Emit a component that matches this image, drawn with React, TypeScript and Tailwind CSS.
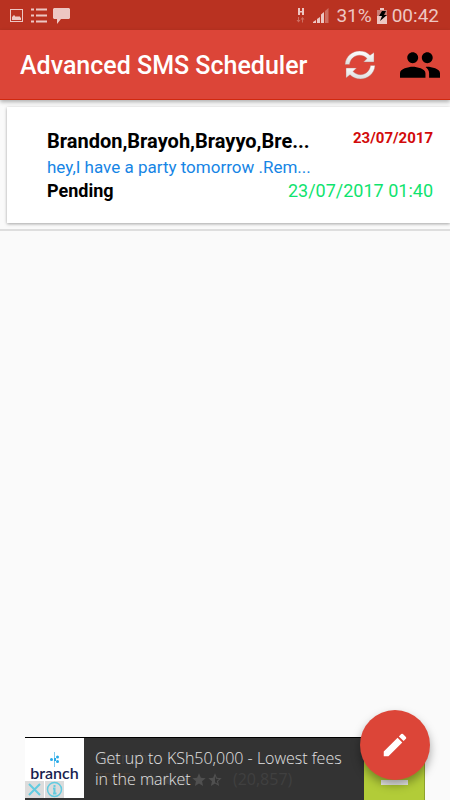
import { MdEdit, MdPeople, MdStar, MdStarHalf } from "react-icons/md"

type Message = {
  id: number
  recipients: string
  created: string
  text: string
  status: string
  sendAt: string
}

const messages: Message[] = [
  {
    id: 1,
    recipients: "Brandon,Brayoh,Brayyo,Bre...",
    created: "23/07/2017",
    text: "hey,I have a party tomorrow .Rem...",
    status: "Pending",
    sendAt: "23/07/2017 01:40",
  },
]

function StatusBar() {
  return (
    <div className="flex h-[30px] items-center justify-between bg-[#b93221] pl-[10px] pr-[11px] pt-px text-[#edc7c3]">
      <div className="flex items-center gap-2">
        <svg width="13" height="13" viewBox="0 0 13 13" fill="none">
          <rect x="0.5" y="0.5" width="12" height="12" stroke="currentColor" />
          <path d="M2 11V8l2-2 2 2 1-1 1 1 1-1 2 2v2z" fill="currentColor" />
        </svg>
        <svg width="16" height="15" viewBox="0 0 16 15" fill="currentColor">
          <path d="M0 0.500h3v2H0zM5 0.500h11v2H5zM0 6.500h3v2H0zM5 6.500h11v2H5zM0 12.500h3v2H0zM5 12.500h11v2H5z" />
        </svg>
        <svg className="-ml-[2px]" width="17" height="16" viewBox="0 0 17 16" fill="currentColor">
          <path d="M1 0h15l1 1v9l-1 1H8l-4 5v-5H1l-1-1V1z" />
        </svg>
      </div>
      <div className="flex items-center">
        <svg className="mr-2" width="9" height="15" viewBox="0 0 9 15" fill="currentColor">
          <path d="M2 0h2v3h2V0h2v7H6V4.500H4V7H2z" />
          <path d="M2 9h1v3h1.500l-2 2.500-2-2.500H2zM6 14.500v-3H4.500l2-2.500 2 2.500H7v3z" opacity="0.4" />
        </svg>
        <svg className="mr-[7px]" width="16" height="15" viewBox="0 0 16 15" fill="currentColor">
          <path d="M0 15v-1l3-2v3zM4 15v-4l3-2v6zM8 15V6.500L11 4v11z" />
          <path d="M12 15V3l3.500-3v15z" opacity="0.4" />
        </svg>
        <span className="text-[19px] leading-6">31%</span>
        <svg className="mx-[5px]" width="10" height="16" viewBox="0 0 10 16">
          <path d="M3 0h4v2h3v14H0V2h3z" fill="currentColor" />
          <path d="M0 2h10v6H0z" fill="#c97e75" />
          <path d="M5 3h4L7 7h3l-7 6 2-5H2z" fill="#000" />
        </svg>
        <span className="text-[19px] leading-6">00:42</span>
      </div>
    </div>
  )
}

function Header() {
  return (
    <header className="relative flex h-[70px] items-center border-b border-[#d0290f] bg-[#dc4538] pl-5 pr-[10px] shadow-[0_2px_4px_rgba(0,0,0,0.3)]">
      <h1 className="flex-1 whitespace-nowrap pt-[2px] text-[25px] font-medium leading-8 text-white">
        Advanced SMS Scheduler
      </h1>
      <button aria-label="Refresh" className="mr-6">
        <svg width="32" height="30" viewBox="0 0 32 30">
          <defs>
            <linearGradient id="silver" x1="0" y1="0" x2="0" y2="1">
              <stop offset="0" stopColor="#fff" />
              <stop offset="1" stopColor="#dedede" />
            </linearGradient>
          </defs>
          <g fill="url(#silver)" stroke="#b9675f" strokeWidth="0.4">
            <path d="M1 14.500C1.500 6.500 8 1 15.500 1c4.500 0 8 1.500 10.500 4.200L30 2.500V12H19.500l3.500-3.500C21 6.500 18.500 5.300 15.500 5.300c-5 0-9.300 3.700-10 9.200z" />
            <path d="M31 15.500C30.500 23.500 24 29 16.500 29c-4.500 0-8-1.500-10.500-4.200L2 28V18h10.500L9 21.500c2 2 4.500 3.200 7.500 3.200 5 0 9.300-3.700 10-9.200z" />
          </g>
        </svg>
      </button>
      <button aria-label="Contacts">
        {/* viewBox trims the icon's empty margin */}
        <MdPeople viewBox="1 5 22 14" className="h-[26px] w-10 text-black" />
      </button>
    </header>
  )
}

function MessageCard({ message }: { message: Message }) {
  return (
    <li className="border-b-2 border-[#dedede] pb-[6px] pl-[7px] pt-[7px]">
      <div className="bg-white pb-5 pl-10 pr-[17px] pt-5 shadow-[0_1px_3px_rgba(0,0,0,0.35)]">
        <div className="flex justify-between">
          <h2 className="whitespace-nowrap text-[20px] font-bold leading-7 text-black">
            {message.recipients}
          </h2>
          <span className="text-[15px] font-bold leading-[22px] text-[#d20a0a]">{message.created}</span>
        </div>
        <p className="text-[17px] leading-6 text-[#1685e5]">{message.text}</p>
        <div className="flex justify-between text-[18px] leading-6">
          <span className="font-bold text-black">{message.status}</span>
          <span className="text-[#0fe36e]">{message.sendAt}</span>
        </div>
      </div>
    </li>
  )
}

function AdBanner() {
  return (
    <aside className="mx-[25px] flex h-[63px] border-t border-black bg-[#333333]">
      <div className="relative h-[60px] w-[59px] bg-white">
        <svg className="mx-auto mt-[14px]" width="10" height="15" viewBox="0 0 10 15" fill="#27aae8">
          <path d="M4 0h1v15H4z" opacity="0.6" />
          <circle cx="1.500" cy="7.500" r="1.500" />
          <circle cx="7.500" cy="5" r="1.500" />
          <circle cx="7.500" cy="9.500" r="1.500" />
          <path d="M4 6h2v3H4z" />
        </svg>
        <div className="text-center font-['Lato',sans-serif] text-[16px] font-semibold leading-3 text-[#17224f]">
          branch
        </div>
        <div className="absolute left-0 top-[43px] flex gap-px">
          <button aria-label="Close ad" className="bg-[#dcdcdc]">
            <svg width="19" height="17" viewBox="0 0 19 17" fill="none" stroke="#62cbe0" strokeWidth="2">
              <path d="M4 3l11 11M15 3L4 14" />
            </svg>
          </button>
          <button aria-label="Ad info" className="bg-[#dcdcdc]">
            <svg width="19" height="17" viewBox="0 0 19 17" fill="none" stroke="#62cbe0" strokeWidth="1.500">
              <circle cx="9.500" cy="8.500" r="7" />
              <path d="M9.500 4v2M8 7.500h1.500V12M8 12.500h3.500" strokeWidth="2" />
            </svg>
          </button>
        </div>
      </div>
      <div className="relative flex-1 pl-[11px] pt-[10px] font-['Open_Sans',sans-serif] text-[16px] leading-[21px]">
        <div aria-hidden="true" className="absolute left-[11px] top-[10px] text-[#404040]">
          <div>Branch</div>
          <div className="flex items-center">
            <span className="mr-3 text-[#43392f]">FREE</span>
            <MdStar size={16} />
            <MdStar size={16} />
            <MdStar size={16} />
            <MdStar size={16} className="text-[#505050]" />
            <MdStarHalf size={16} className="text-[#505050]" />
            <span className="ml-[10px]">(20,857)</span>
          </div>
        </div>
        <p className="relative whitespace-nowrap font-light text-[#e2e2e2]">
          Get up to KSh50,000 - Lowest fees
          <br />
          in the market
        </p>
      </div>
      <button
        aria-label="Install"
        className="flex w-[61px] items-end justify-center border-r border-[#8fa32d] bg-[#b2cc38] pb-[15px]"
      >
        <span className="h-[5px] w-[27px] bg-[#e9e9e9]" />
      </button>
    </aside>
  )
}

export default function App() {
  return (
    <div className="flex min-h-screen flex-col bg-[#fafafa] font-[Roboto,sans-serif]">
      <StatusBar />
      <Header />
      <main className="flex-1">
        <ul>
          {messages.map((message) => (
            <MessageCard key={message.id} message={message} />
          ))}
        </ul>
      </main>
      <AdBanner />
      <button
        aria-label="New message"
        className="fixed bottom-5 right-5 flex size-[70px] items-center justify-center rounded-full bg-[#dc4538] text-white shadow-[0_5px_10px_rgba(0,0,0,0.35)]"
      >
        <MdEdit size={30} />
      </button>
    </div>
  )
}
